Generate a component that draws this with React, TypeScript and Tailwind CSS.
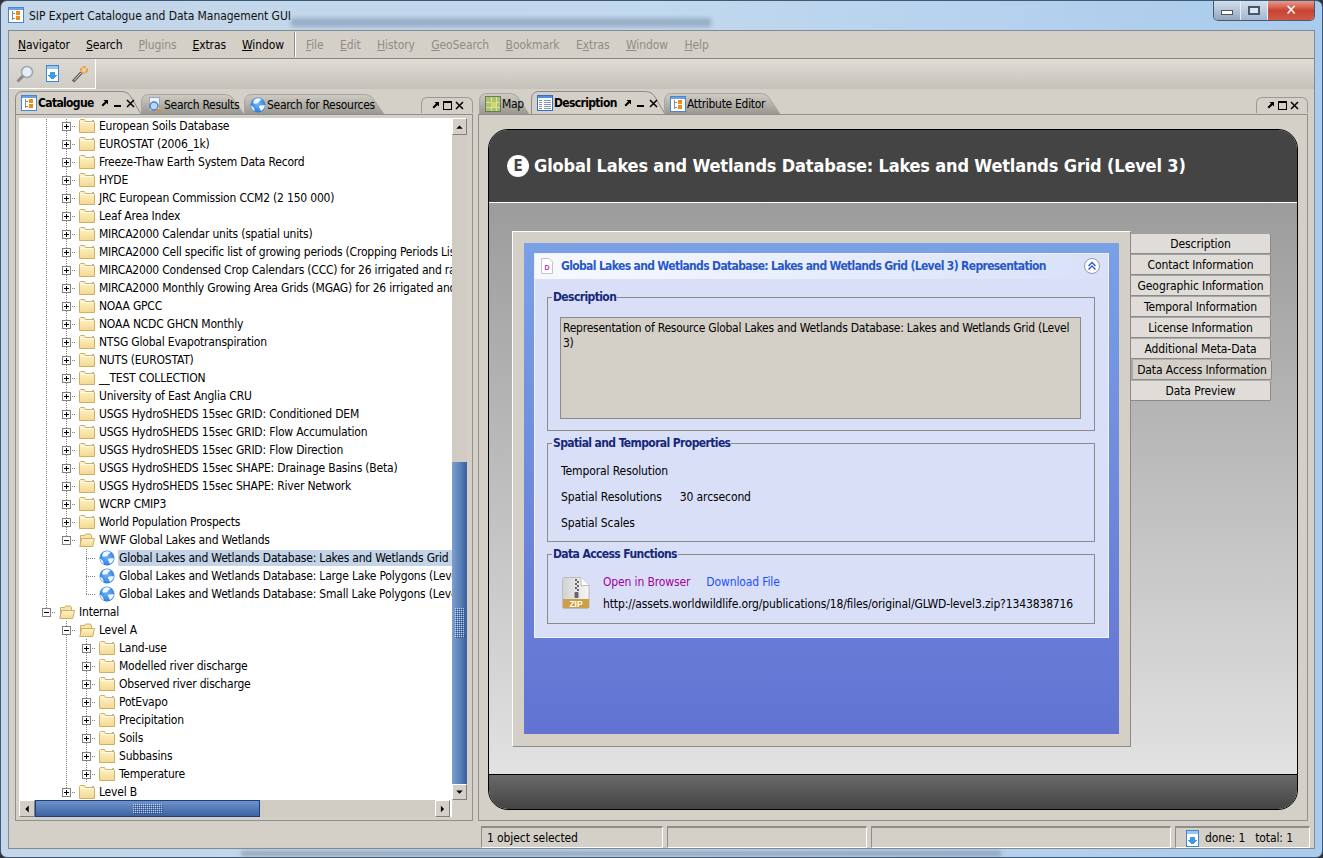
import type { ReactNode } from 'react';

type TreeRow = {
  label: string;
  guides: boolean[];
  kind: 'closed' | 'open' | 'leaf';
  last?: boolean;
  selected?: boolean;
};

const g1 = [true];

const folderNames = [
  'European Soils Database',
  'EUROSTAT (2006_1k)',
  'Freeze-Thaw Earth System Data Record',
  'HYDE',
  'JRC European Commission CCM2 (2 150 000)',
  'Leaf Area Index',
  'MIRCA2000 Calendar units (spatial units)',
  'MIRCA2000 Cell specific list of growing periods (Cropping Periods List)',
  'MIRCA2000 Condensed Crop Calendars (CCC) for 26 irrigated and rainfed crops',
  'MIRCA2000 Monthly Growing Area Grids (MGAG) for 26 irrigated and rainfed crops',
  'NOAA GPCC',
  'NOAA NCDC GHCN Monthly',
  'NTSG Global Evapotranspiration',
  'NUTS (EUROSTAT)',
  '__TEST COLLECTION',
  'University of East Anglia CRU',
  'USGS HydroSHEDS 15sec GRID: Conditioned DEM',
  'USGS HydroSHEDS 15sec GRID: Flow Accumulation',
  'USGS HydroSHEDS 15sec GRID: Flow Direction',
  'USGS HydroSHEDS 15sec SHAPE: Drainage Basins (Beta)',
  'USGS HydroSHEDS 15sec SHAPE: River Network',
  'WCRP CMIP3',
  'World Population Prospects',
];

const rows: TreeRow[] = [
  ...folderNames.map((label) => ({ label, guides: g1, kind: 'closed' as const })),
  { label: 'WWF Global Lakes and Wetlands', guides: g1, kind: 'open', last: true },
  { label: 'Global Lakes and Wetlands Database: Lakes and Wetlands Grid (Level 3)', guides: [true, false], kind: 'leaf', selected: true },
  { label: 'Global Lakes and Wetlands Database: Large Lake Polygons (Level 1)', guides: [true, false], kind: 'leaf' },
  { label: 'Global Lakes and Wetlands Database: Small Lake Polygons (Level 2)', guides: [true, false], kind: 'leaf', last: true },
  { label: 'Internal', guides: [], kind: 'open', last: true },
  { label: 'Level A', guides: [false], kind: 'open' },
  ...['Land-use', 'Modelled river discharge', 'Observed river discharge', 'PotEvapo', 'Precipitation', 'Soils', 'Subbasins', 'Temperature'].map((label) => ({
    label,
    guides: [false, true],
    kind: 'closed' as const,
  })),
  { label: 'Level B', guides: [false], kind: 'closed', last: true },
];

const Connector = ({ kind, last }: { kind: TreeRow['kind']; last?: boolean }) => (
  <svg width="20" height="18" className="shrink-0" shapeRendering="crispEdges">
    <path d={`M10.5 0V${last ? 9 : 18}M10 9.5H20`} stroke="#808080" strokeDasharray="1 1" fill="none" />
    {kind !== 'leaf' && (
      <>
        <rect x="6.5" y="5.5" width="8" height="8" fill="#fff" stroke="#808080" />
        <path d={kind === 'closed' ? 'M8 9.5h5M10.5 7v5' : 'M8 9.5h5'} stroke="#000" />
      </>
    )}
  </svg>
);

const FolderIcon = ({ open }: { open: boolean }) => (
  <svg width="16" height="16" viewBox="0 0 16 16" className="shrink-0">
    <defs>
      <linearGradient id="folderFill" x1="0" y1="0" x2="0" y2="1">
        <stop offset="0" stopColor="#fff4cc" />
        <stop offset="1" stopColor="#f5d88f" />
      </linearGradient>
    </defs>
    {open ? (
      <>
        <path d="M1.500 14V3.500h4l1-1.500h5l1 2V6" fill="#f8e3ab" stroke="#cfae66" />
        <path d="M.8 14.500 2.600 6.500h12.800l-1.600 8z" fill="url(#folderFill)" stroke="#cfae66" />
      </>
    ) : (
      <>
        <path d="M.5 14.500V2.500l1-1h4l1 2h8.500l.5.5v10.500z" fill="url(#folderFill)" stroke="#cfae66" />
        <path d="M1.500 4.500h13" stroke="#fffae6" />
        <path d="M13 2.500h2" stroke="#8fc0e0" />
      </>
    )}
  </svg>
);

const GlobeIcon = ({ size = 16 }: { size?: number }) => (
  <svg width={size} height={size} viewBox="0 0 16 16" className="shrink-0">
    <defs>
      <radialGradient id="globeFill" cx="0.5" cy="0.45" r="0.6">
        <stop offset="0" stopColor="#6fb4f5" />
        <stop offset="0.7" stopColor="#3d8ce8" />
        <stop offset="1" stopColor="#2a68cc" />
      </radialGradient>
    </defs>
    <circle cx="8" cy="8" r="7.500" fill="url(#globeFill)" />
    <path d="M5 2c2-1 5-1 6.500.5-1 1.500-2 1-2.500 2.500S5.500 7 4 6.500 3.500 3.500 5 2zM10 8.500c2-.5 4-.5 5 0-.5 2.500-2 4.500-4 5.500-1-1-.5-2-1.500-3S9 9 10 8.500zM1 9c1.500 0 2.500 1 3 2.500S5 14 4.500 14 1.500 12 1 9z" fill="#eef6ff" />
  </svg>
);

const Row = ({ row }: { row: TreeRow }) => (
  <div className="flex h-[18px] items-center whitespace-nowrap">
    {row.guides.map((on, i) => (
      <svg key={i} width="20" height="18" className="shrink-0" shapeRendering="crispEdges">
        {on && <path d="M10.500 0V18" stroke="#808080" strokeDasharray="1 1" />}
      </svg>
    ))}
    <Connector kind={row.kind} last={row.last} />
    <span className="ml-[3px] mr-[3px] flex">
      {row.kind === 'leaf' ? <GlobeIcon /> : <FolderIcon open={row.kind === 'open'} />}
    </span>
    <span className={`pl-px pr-1 leading-[16px] tracking-[-0.2px] ${row.selected ? 'bg-[#c3d3e8]' : ''}`}>{row.label}</span>
  </div>
);

const ArrowBtn = ({ dir, className }: { dir: 'up' | 'down' | 'left' | 'right'; className: string }) => {
  const paths = { up: 'M4 10 8 6l4 4z', down: 'M4 6l4 4 4-4z', left: 'M10 4 6 8l4 4z', right: 'M6 4l4 4-4 4z' };
  return (
    <div className={`flex shrink-0 items-center justify-center border-b border-r border-b-[#808080] border-r-[#808080] border-l border-t border-l-white border-t-white bg-[#d4d0c8] ${className}`}>
      <svg width="16" height="16" viewBox="0 0 16 16">
        <path d={paths[dir]} fill="#000" />
      </svg>
    </div>
  );
};

const Gripper = ({ w, h }: { w: number; h: number }) => (
  <svg width={w} height={h}>
    <defs>
      <pattern id={`grip${w}`} width="2" height="2" patternUnits="userSpaceOnUse">
        <rect width="1" height="1" fill="#c7d4ea" />
        <rect x="1" y="1" width="1" height="1" fill="#2d5189" />
      </pattern>
    </defs>
    <rect width={w} height={h} fill={`url(#grip${w})`} />
  </svg>
);

const PinIcon = () => (
  <svg width="9" height="9" viewBox="0 0 9 9">
    <path d="M3.500 1H8v4.500L6.500 4 3 7.500 1.500 6 5 2.500z" fill="#000" />
  </svg>
);
const MinIcon = () => (
  <svg width="9" height="9" viewBox="0 0 9 9">
    <path d="M1 7h7" stroke="#000" strokeWidth="2" />
  </svg>
);
const MaxIcon = () => (
  <svg width="9" height="9" viewBox="0 0 9 9" shapeRendering="crispEdges">
    <path d="M.5.500h8v8h-8zM.5 1.500h8" stroke="#000" fill="none" />
  </svg>
);
const CloseIcon = () => (
  <svg width="9" height="9" viewBox="0 0 9 9">
    <path d="M1 1l7 7M8 1 1 8" stroke="#000" strokeWidth="1.500" />
  </svg>
);

const TabShape = ({ w, h, active }: { w: number; h: number; active: boolean }) => (
  <svg width={w} height={h} className="absolute left-0 top-0">
    <defs>
      <linearGradient id="tabIdle" x1="0" y1="0" x2="0" y2="1">
        <stop offset="0" stopColor="#d0ccc4" />
        <stop offset="1" stopColor="#999791" />
      </linearGradient>
    </defs>
    <path
      d={`M.5 ${h}V8Q.5 .5 8 .5H${w - 22}Q${w - 15} .5 ${w - 12} 6L${w - 2} ${h}`}
      fill={active ? '#d4d0c8' : 'url(#tabIdle)'}
      stroke={active ? '#8a8a8a' : '#a8a6a0'}
    />
  </svg>
);

const Tab = ({ w, h, active, icon, label }: { w: number; h: number; active?: boolean; icon: ReactNode; label: string }) => (
  <div className="relative shrink-0 self-end" style={{ width: w, height: h }}>
    <TabShape w={w} h={h} active={!!active} />
    <div className={`relative flex h-full items-center pl-[6px] pt-px ${active ? 'font-bold' : ''}`}>
      <span className="mr-px flex">{icon}</span>
      <span className={`whitespace-nowrap ${active ? 'tracking-[-0.65px]' : 'tracking-[-0.3px]'}`}>{label}</span>
      {active && (
        <span className="ml-[6px] flex gap-[4px]">
          <PinIcon />
          <MinIcon />
          <CloseIcon />
        </span>
      )}
    </div>
  </div>
);

const MiniBar = () => (
  <div className="mb-px flex h-[16px] w-[52px] items-center justify-center gap-[3px] rounded-t-md border border-b-0 border-[#9a9a9a]">
    <PinIcon />
    <MaxIcon />
    <CloseIcon />
  </div>
);

const CatalogueIcon = () => (
  <svg width="16" height="16" viewBox="0 0 16 16" shapeRendering="crispEdges">
    <rect x=".5" y=".5" width="15" height="15" fill="#fff" stroke="#4a86d0" />
    <rect x="1" y="1" width="14" height="2" fill="#6aa2e4" />
    <rect x="8" y="4" width="4" height="4" fill="#f08a1c" />
    <rect x="8" y="9" width="4" height="4" fill="#f08a1c" />
    <path d="M4.500 4v9M4.500 6.500H7M4.500 11.500H7" stroke="#8a8a8a" />
  </svg>
);

const SearchDoc = () => (
  <svg width="16" height="16" viewBox="0 0 16 16">
    <rect x="2.500" y=".5" width="10" height="13" fill="#eef2fa" stroke="#9aa6ba" />
    <circle cx="7" cy="9" r="4" fill="#bcd8f5" stroke="#4d7fc0" strokeWidth="1.500" />
    <path d="M10 12l4 3" stroke="#e08a20" strokeWidth="2" />
  </svg>
);

const MapIcon = () => (
  <svg width="16" height="16" viewBox="0 0 16 16" shapeRendering="crispEdges">
    <rect x=".5" y=".5" width="15" height="15" fill="#a9c46a" stroke="#6b7a5a" />
    <path d="M1 6h14M1 11h14M6 1v14M11 1v14" stroke="#d9e2a0" />
    <rect x="6" y="6" width="5" height="5" fill="#d6d676" />
  </svg>
);

const TableIcon = () => (
  <svg width="16" height="16" viewBox="0 0 16 16" shapeRendering="crispEdges">
    <rect x=".5" y=".5" width="15" height="15" fill="#fff" stroke="#2f6fc4" />
    <rect x="1" y="1" width="14" height="2" fill="#4f90e0" />
    <path d="M2 5h3M7 5h7M2 7h3M7 7h7M2 9h3M7 9h7M2 11h3M7 11h7M2 13h3M7 13h7" stroke="#7d93b8" />
  </svg>
);

const DownloadIcon = () => (
  <svg width="13" height="17" viewBox="0 0 13 17" shapeRendering="crispEdges" className="shrink-0">
    <rect x=".5" y=".5" width="12" height="16" fill="#fff" stroke="#3f85cf" />
    <rect x="1" y="1" width="11" height="3" fill="#9cc6ee" />
    <path d="M4 7h5v3h2.500L6.500 14.500 1.500 10H4z" fill="#3f9be8" />
  </svg>
);

const ZipIcon = () => (
  <svg width="28" height="32" viewBox="0 0 28 32">
    <defs>
      <linearGradient id="zipPage" x1="0" y1="0" x2="1" y2="0">
        <stop offset="0" stopColor="#d2d2d2" />
        <stop offset="1" stopColor="#f6f6f6" />
      </linearGradient>
    </defs>
    <path d="M.5 1.500 1.500.5H19l8 8v22l-1 1H1.500l-1-1z" fill="url(#zipPage)" stroke="#bcbcbc" />
    <path d="M19 .5v8h8" fill="#fff" stroke="#bcbcbc" />
    <path d="M1 22h26v8.500l-.5.5h-25l-.5-.5z" fill="#cf9f45" />
    <path d="M13 2h2v2h-2zM15 4h2v2h-2zM13 6h2v2h-2zM15 8h2v2h-2zM13 10h2v2h-2zM15 12h2v2h-2z" fill="#666" />
    <rect x="12.500" y="15" width="4" height="6" rx="1" fill="#666" />
    <text x="14" y="30" textAnchor="middle" fontSize="8.500" fontWeight="700" fill="#fff" fontFamily="Liberation Sans, sans-serif">ZIP</text>
  </svg>
);

const WrenchIcon = () => (
  <svg width="18" height="18" viewBox="0 0 18 18" className="shrink-0">
    <path d="M2 16.500 10.500 7.500" stroke="#555" strokeWidth="3" />
    <path d="M3 15.500 10 8" stroke="#e8e8e8" strokeWidth="1" />
    <circle cx="13" cy="5" r="3" fill="none" stroke="#f0a030" strokeWidth="2.200" strokeDasharray="3 1.200" />
  </svg>
);

const MagnifierIcon = () => (
  <svg width="18" height="18" viewBox="0 0 18 18" className="shrink-0">
    <circle cx="11" cy="7" r="5.500" fill="#e8eef5" stroke="#9aa3ae" strokeWidth="1.500" />
    <path d="M7 11 1.500 16.500" stroke="#8a8a8a" strokeWidth="3" />
  </svg>
);

const Menu = ({ label, k, disabled }: { label: string; k: string; disabled?: boolean }) => {
  const idx = label.indexOf(k);
  return (
    <span className={disabled ? 'text-[#8e8c87]' : 'text-black'}>
      {label.slice(0, idx)}
      <span className="underline">{k}</span>
      {label.slice(idx + 1)}
    </span>
  );
};

const Fieldset = ({ title, h, children }: { title: string; h: number; children: ReactNode }) => (
  <fieldset className="ml-[12px] mr-[13px] rounded-none border border-[#8b8b8b] pb-0 pl-[12px] pr-[13px] pt-0" style={{ height: h }}>
    <legend className="ml-[-8px] px-px font-bold leading-[14px] tracking-[-0.6px] text-[#16287a]">{title}</legend>
    {children}
  </fieldset>
);

const sideTabs = ['Description', 'Contact Information', 'Geographic Information', 'Temporal Information', 'License Information', 'Additional Meta-Data', 'Data Access Information', 'Data Preview'];

const Inset = ({ w, children }: { w: number; children?: ReactNode }) => (
  <div className="flex h-[22px] shrink-0 items-center border-b border-l border-r border-t-2 border-b-white border-l-[#8f8d88] border-r-white border-t-[#8f8d88] pl-[5px] pt-px" style={{ width: w }}>
    {children}
  </div>
);

export default function App() {
  return (
    <div
      className="relative h-[858px] w-[1323px] overflow-hidden bg-[#30343a] text-[12px] leading-[14px] tracking-[-0.1px] text-black"
      style={{ fontFamily: '"DejaVu Sans Condensed", "Noto Sans", sans-serif' }}
    >
      <div className="flex h-full flex-col rounded-[7px] border border-[#3f5a78] bg-gradient-to-r from-[#c4d6e8] via-[#c2d8ee] to-[#a9cbec]">
        {/* title bar */}
        <div className="relative flex h-[29px] shrink-0 items-start">
          <div className="absolute left-[290px] top-[17px] h-[9px] w-[420px] bg-[#6f86a2] opacity-50 blur-[2px]" />
          <div className="ml-[7px] mt-[6px] flex">
            <CatalogueIcon />
          </div>
          <span className="ml-[5px] mt-[8px] tracking-[-0.05px] text-[#101010]">SIP Expert Catalogue and Data Management GUI</span>
          <div className="ml-auto mr-[7px] flex h-[20px] overflow-hidden rounded-b-[5px] border border-t-0 border-[#49586c]">
            <div className="flex w-[27px] items-center justify-center border-r border-[#e8eef6] bg-gradient-to-b from-[#d5dfeb] to-[#92a6bf]">
              <div className="mt-[4px] h-[5px] w-[12px] border border-[#47566a] bg-white" />
            </div>
            <div className="flex w-[27px] items-center justify-center border-r border-[#e8eef6] bg-gradient-to-b from-[#d5dfeb] to-[#a3b8d0]">
              <div className="h-[9px] w-[12px] border-2 border-[#47566a] bg-[#dfe7f1]" />
            </div>
            <div className="flex w-[46px] items-center justify-center bg-gradient-to-b from-[#e89a8a] via-[#c9412f] to-[#cf5a48]">
              <span className="text-[15px] font-bold leading-none text-white">✕</span>
            </div>
          </div>
        </div>

        {/* application frame */}
        <div className="mx-[7px] flex min-h-0 flex-1 flex-col border border-[#7f8b98] bg-[#d4d0c8]">
          <div className="flex h-[28px] shrink-0 items-center border-b border-[#858585] pl-[9px]">
            <div className="flex gap-[16px]">
              <Menu label="Navigator" k="N" />
              <Menu label="Search" k="S" />
              <Menu label="Plugins" k="P" disabled />
              <Menu label="Extras" k="E" />
              <Menu label="Window" k="W" />
            </div>
            <div className="ml-[10px] mr-[10px] h-[25px] border-l border-r border-l-[#8d8d8d] border-r-white" />
            <div className="flex gap-[16.5px]">
              <Menu label="File" k="F" disabled />
              <Menu label="Edit" k="E" disabled />
              <Menu label="History" k="H" disabled />
              <Menu label="GeoSearch" k="G" disabled />
              <Menu label="Bookmark" k="B" disabled />
              <Menu label="Extras" k="x" disabled />
              <Menu label="Window" k="W" disabled />
              <Menu label="Help" k="H" disabled />
            </div>
          </div>
          <div className="flex h-[30px] shrink-0 bg-gradient-to-b from-[#e0ddd6] to-[#c4c1ba]">
            <div className="flex w-[87px] items-center gap-[12px] border-b border-r border-b-white border-r-white bg-gradient-to-b from-[#dcd9d2] to-[#d0cdc6] pl-[7px]">
              <MagnifierIcon />
              <DownloadIcon />
              <WrenchIcon />
            </div>
          </div>

          {/* panels */}
          <div className="flex min-h-0 flex-1 pl-[5px] pr-[6px] pt-[2px]">
            {/* left view */}
            <div className="flex w-[459px] shrink-0 flex-col pl-px">
              <div className="flex h-[23px] shrink-0 items-end">
                <Tab w={128} h={23} active icon={<CatalogueIcon />} label="Catalogue" />
                <div className="-ml-[2px]"><Tab w={105} h={20} icon={<SearchDoc />} label="Search Results" /></div>
                <div className="-ml-[2px]"><Tab w={142} h={20} icon={<GlobeIcon />} label="Search for Resources" /></div>
                <div className="ml-auto"><MiniBar /></div>
              </div>
              <div className="flex min-h-0 flex-1 flex-col border border-[#8f8f8f] pb-[3px] pl-[3px] pr-[5px] pt-[3px]">
                <div className="flex min-h-0 flex-1">
                  <div className="min-w-0 flex-1 overflow-hidden bg-white pl-[17px]">
                    <div className="-mt-px">
                      {rows.map((row) => (
                        <Row key={row.label} row={row} />
                      ))}
                    </div>
                  </div>
                  <div className="flex w-[15px] shrink-0 flex-col bg-[#d4d0c8]">
                    <ArrowBtn dir="up" className="h-[17px]" />
                    <div className="h-[327px] shrink-0 bg-[#d0ccc4]" />
                    <div className="flex flex-1 items-center justify-center bg-gradient-to-r from-[#7f9fcd] via-[#5c83bb] to-[#38609f]">
                      <Gripper w={10} h={30} />
                    </div>
                    <ArrowBtn dir="down" className="h-[16px]" />
                  </div>
                </div>
                <div className="flex h-[17px] shrink-0 bg-[#d4d0c8]">
                  <ArrowBtn dir="left" className="w-[16px]" />
                  <div className="flex w-[225px] shrink-0 items-center justify-center border border-[#1d3f7d] bg-gradient-to-b from-[#6f92c8] to-[#3d64a3]">
                    <Gripper w={30} h={10} />
                  </div>
                  <div className="flex-1 bg-[#d0ccc4]" />
                  <ArrowBtn dir="right" className="w-[15px]" />
                  <div className="w-[2px] bg-white" />
                  <div className="w-[15px]" />
                </div>
              </div>
            </div>

            {/* right view */}
            <div className="ml-[5px] flex min-w-0 flex-1 flex-col">
              <div className="flex h-[23px] shrink-0 items-end pl-px">
                <Tab w={52} h={21} icon={<MapIcon />} label="Map" />
                <Tab w={136} h={23} active icon={<TableIcon />} label="Description" />
                <div className="-ml-[3px]"><Tab w={118} h={21} icon={<CatalogueIcon />} label="Attribute Editor" /></div>
                <div className="ml-auto"><MiniBar /></div>
              </div>
              <div className="flex min-h-0 flex-1 flex-col border border-[#8f8f8f] px-[9px] pb-[10px] pt-[14px]">
                <div className="flex min-h-0 flex-1 flex-col overflow-hidden rounded-[20px] border border-black">
                  <div className="flex h-[73px] shrink-0 items-center gap-[5px] border-b border-white bg-[#444444] pl-[18px] text-[18px] font-bold tracking-[-0.16px] text-white">
                    <span className="flex h-[22px] w-[22px] items-center justify-center rounded-full bg-white text-[15px] text-[#444444]">E</span>
                    Global Lakes and Wetlands Database: Lakes and Wetlands Grid (Level 3)
                  </div>
                  <div className="min-h-0 flex-1 bg-gradient-to-b from-[#9c9c9c] to-[#e2e2e2] pl-[23px] pt-[28px]">
                    <div className="flex items-start">
                      <div className="h-[516px] w-[619px] shrink-0 border-b border-r border-l border-t border-b-[#8a8a8a] border-l-white border-r-[#8a8a8a] border-t-white bg-[#d4d0c8] p-[11px]">
                        <div className="h-[491px] bg-gradient-to-b from-[#7aa0e6] to-[#6273d2] p-[10px]">
                          <div className="h-[385px] border border-[#eef2fc] bg-[#d8dff7]">
                            <div className="flex h-[25px] items-center whitespace-nowrap bg-gradient-to-r from-[#f7f9fe] to-[#d8e1f8] pb-px pl-[5px] font-bold text-[#2858c8]">
                              <svg width="14" height="16" viewBox="0 0 14 16" className="shrink-0">
                                <path d="M1.500.5H9l3.500 3.500v11.500h-11z" fill="#fff" stroke="#c4c4c4" />
                                <text x="7" y="12" textAnchor="middle" fontSize="7" fontWeight="700" fill="#b030b0" fontFamily="Liberation Sans, sans-serif">D</text>
                              </svg>
                              <span className="ml-[7px] tracking-[-0.65px]">Global Lakes and Wetlands Database: Lakes and Wetlands Grid (Level 3) Representation</span>
                              <svg width="16" height="16" viewBox="0 0 16 16" className="ml-auto mr-[8px] shrink-0">
                                <circle cx="8" cy="8" r="7.500" fill="#fff" stroke="#8d99b0" />
                                <path d="M4.500 8 8 4.500 11.500 8M4.500 11.500 8 8l3.500 3.500" fill="none" stroke="#2858c8" strokeWidth="1.300" />
                              </svg>
                            </div>
                            <div className="flex flex-col gap-[5px] pt-[11px]">
                              <Fieldset title="Description" h={141}>
                                <div className="mt-[13px] h-[102px] border border-[#8b8b8b] bg-[#d4d0c8] pl-[2px] pt-[3px] leading-[15px] tracking-[-0.25px]">
                                  Representation of Resource Global Lakes and Wetlands Database: Lakes and Wetlands Grid (Level 3)
                                </div>
                              </Fieldset>
                              <Fieldset title="Spatial and Temporal Properties" h={106}>
                                <div className="flex flex-col gap-[12px] pl-px pt-[14px]">
                                  <span>Temporal Resolution</span>
                                  <span>Spatial Resolutions<span className="ml-[18px]">30 arcsecond</span></span>
                                  <span>Spatial Scales</span>
                                </div>
                              </Fieldset>
                              <Fieldset title="Data Access Functions" h={77}>
                                <div className="flex items-center gap-[13px] pl-[2px] pt-[14px]">
                                  <ZipIcon />
                                  <div className="flex flex-col gap-[8px] whitespace-nowrap tracking-[-0.13px]">
                                    <div className="flex gap-[16px]">
                                      <span className="text-[#a000a0]">Open in Browser</span>
                                      <span className="text-[#1f4fff]">Download File</span>
                                    </div>
                                    <span>http://assets.worldwildlife.org/publications/18/files/original/GLWD-level3.zip?1343838716</span>
                                  </div>
                                </div>
                              </Fieldset>
                            </div>
                          </div>
                        </div>
                      </div>
                      <div className="mt-[3px] flex flex-col gap-px">
                        {sideTabs.map((t) => (
                          <div
                            key={t}
                            className={`flex h-[20px] items-center justify-center rounded-r-[2px] border-b border-r border-b-[#8a8a8a] border-r-[#8a8a8a] ${t === 'Data Access Information' ? 'w-[141px] border-l-2 border-l-[#a8a8a8] bg-[#d4d0c8]' : 'w-[140px] bg-[#e0ddd8]'}`}
                          >
                            {t}
                          </div>
                        ))}
                      </div>
                    </div>
                  </div>
                  <div className="h-[35px] shrink-0 border-t border-black bg-gradient-to-b from-[#6a6a6a] to-[#444444]" />
                </div>
              </div>
            </div>
          </div>

          {/* status bar */}
          <div className="flex h-[27px] shrink-0 items-end justify-end gap-[4px] pr-[4px]">
            <Inset w={182}>1 object selected</Inset>
            <Inset w={200} />
            <Inset w={300} />
            <Inset w={135}>
              <span className="ml-[5px] flex"><DownloadIcon /></span>
              <span className="ml-[6px] whitespace-pre">done: 1   total: 1</span>
            </Inset>
          </div>
        </div>
        <div className="relative h-[8px] shrink-0">
          <div className="absolute left-[240px] top-[2px] h-[5px] w-[760px] bg-[#5f6f84] opacity-50 blur-[2px]" />
        </div>
      </div>
    </div>
  );
}
